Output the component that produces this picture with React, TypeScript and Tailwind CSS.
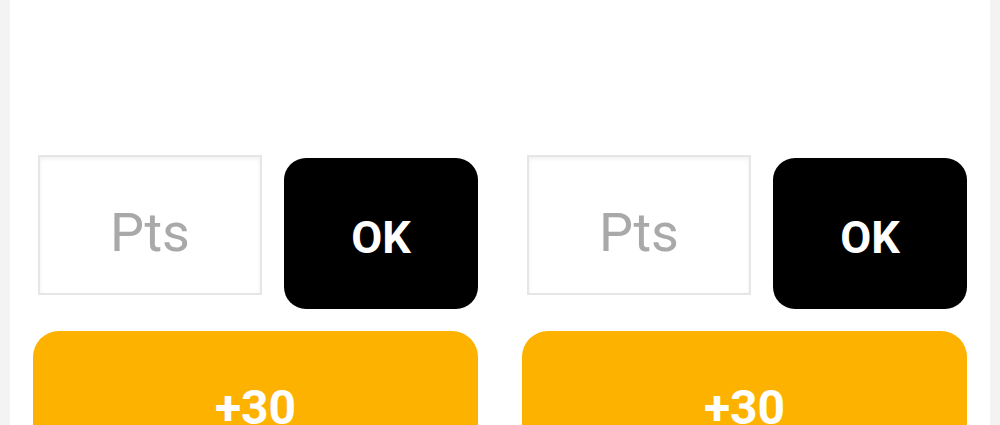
import React from 'react';

function ScoreColumn({ offset }: { offset: string }) {
  return (
    <div className={`flex flex-col shrink-0 ${offset}`}>
      <div className="flex items-start shrink-0">
        <input
          placeholder="Pts"
          className="ml-[5px] w-[224px] h-[140px] pt-[14px] border-2 border-[#e6e6e6] bg-white shadow-[inset_0_2px_4px_rgba(0,0,0,0.06)] text-center text-[54px] text-[#333] placeholder:text-[#a9a9a9] outline-none"
        />
        <button className="ml-[22px] mt-[3px] w-[194px] h-[151px] rounded-[22px] bg-black text-white font-bold text-[45px] pt-[8px]">
          OK
        </button>
      </div>
      <button className="shrink-0 mt-[22px] w-[445px] h-[154px] rounded-[26px] bg-[#feb200] text-white font-bold text-[48px]">
        +30
      </button>
    </div>
  );
}

export default function App() {
  return (
    <div className="h-[425px] w-[1000px] overflow-hidden bg-[#f3f3f3] px-[10px]" style={{ fontFamily: 'Roboto, "Noto Sans", sans-serif' }}>
      <div className="h-full bg-white pt-[155px] pl-[23px] flex items-start">
        <ScoreColumn offset="" />
        <ScoreColumn offset="ml-[44px]" />
      </div>
    </div>
  );
}
